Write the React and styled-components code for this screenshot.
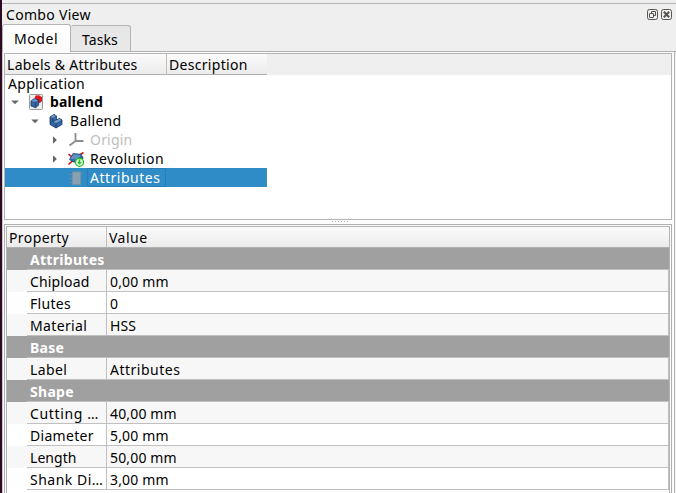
import React from "react";
import styled, { createGlobalStyle } from "styled-components";

const Global = createGlobalStyle`
  * { box-sizing: border-box; }
  body { margin: 0; overflow: hidden; background: #efefef; }
`;

const Window = styled.div`
  width: 676px;
  height: 493px;
  overflow: hidden;
  display: flex;
  flex-direction: column;
  background: #efefef;
  border-left: 2px solid #2c0a22;
  font-family: "Noto Sans", "Open Sans", sans-serif;
  font-size: 14px;
  color: #000;
`;

const TopEdge = styled.div`
  height: 4px;
  flex: none;
  border-bottom: 1px solid #b4b4b4;
`;

const TitleBar = styled.header`
  height: 20px;
  flex: none;
  display: flex;
  align-items: flex-start;
  justify-content: space-between;
  padding: 1px 4px 0 4px;
`;

const DockButtons = styled.div`
  display: flex;
  gap: 3px;
  padding-top: 4px;
  svg { display: block; }
`;

const Label = styled.span`
  display: block;
  white-space: pre;
  line-height: 19px;
  font-weight: ${(p) => (p.$bold ? 700 : 400)};
  letter-spacing: ${(p) => p.$track ?? 0.3}px;
`;

const TabBar = styled.nav`
  height: 28px;
  flex: none;
  display: flex;
  align-items: flex-end;
  border-bottom: 1px solid #b0b0b0;
`;

const Tab = styled.div`
  width: ${(p) => p.$width}px;
  height: ${(p) => (p.$active ? 28 : 26)}px;
  margin-bottom: ${(p) => (p.$active ? -1 : 0)}px;
  padding: 4px 0 0 11px;
  border: 1px solid #b4b4b4;
  border-left-width: ${(p) => (p.$active ? 1 : 0)}px;
  border-bottom: 0;
  border-radius: 3px 3px 0 0;
  background: ${(p) => (p.$active ? "linear-gradient(#ffffff, #fafafa)" : "linear-gradient(#e6e6e6, #e9e9e9)")};
`;

const Pane = styled.main`
  flex: 1;
  min-height: 0;
  width: 673px;
  display: flex;
  flex-direction: column;
  padding: 1px 2px 0 1px;
  background: #fcfcfc;
  border: solid #b4b4b4;
  border-width: 0 1px 0 1px;
  border-left-color: #c8c8c8;
`;

const TreeFrame = styled.section`
  height: 167px;
  flex: none;
  background: #fff;
  border: 1px solid #b4b4b4;
`;

const HeaderBar = styled.div`
  height: 21px;
  display: flex;
  background: #efefef;
`;

const HeaderCell = styled.div`
  width: ${(p) => p.$width};
  flex: none;
  padding: 1px 0 0 2px;
  background: linear-gradient(#fbfbfb, #ebebeb);
  border-bottom: 1px solid #b0b0b0;
  border-right: ${(p) => (p.$last ? "0" : "1px solid #c0c0c0")};
`;

const TreeRow = styled.div`
  width: 262px;
  height: ${(p) => (p.$root ? 17 : 19)}px;
  display: flex;
  align-items: center;
  padding-left: ${(p) => p.$indent}px;
  color: ${(p) => (p.$muted ? "#bebebe" : p.$selected ? "#fff" : "#000")};
  background: ${(p) => (p.$selected ? "#308cc6" : "transparent")};
`;

const ArrowSlot = styled.span`
  width: 19px;
  height: 19px;
  flex: none;
  display: flex;
  align-items: center;
  padding-left: 2px;
`;

const IconSlot = styled.span`
  width: 16px;
  height: 16px;
  flex: none;
  margin-right: 6px;
  svg { display: block; }
`;

const FocusCell = styled.span`
  width: 79px;
  height: 19px;
  margin-left: -3px;
  padding-left: 2px;
  border: 1px solid #2a7db2;
  border-radius: 1px;
  display: flex;
  align-items: center;
  flex: none;
`;

const Splitter = styled.div`
  height: 4px;
  flex: none;
  display: flex;
  justify-content: center;
  gap: 2px;
  padding: 1px 0 0 3px;
`;

const Grip = styled.i`
  width: 1px;
  height: 1px;
  background: #a8a8a8;
`;

const PropertyFrame = styled.section`
  flex: 1;
  min-height: 0;
  overflow: hidden;
  padding: 1px 1px 0;
  background: #fcfcfc;
  border: 1px solid #b0b0b0;
  border-bottom: 0;
`;

const PropertyTable = styled.div`
  height: 100%;
  overflow: hidden;
  background: #fff;
  border: 1px solid #b4b4b4;
  border-bottom: 0;
`;

const GroupRow = styled.div`
  height: 22px;
  padding-left: 20px;
  background: #a0a0a0;
  color: #fff;
`;

const GroupCell = styled.div`
  height: 22px;
  padding: 2px 0 0 3px;
  border-bottom: 1px solid #c0c0c0;
`;

const PropertyRow = styled.div`
  height: 22px;
  display: flex;
  padding-left: 20px;
  background: ${(p) => (p.$alt ? "#f7f7f7" : "#fff")};
`;

const PropertyCell = styled.div`
  width: ${(p) => (p.$value ? "562px" : "80px")};
  padding: 2px 0 0 3px;
  border-right: 1px solid #c0c0c0;
  border-bottom: 1px solid #c0c0c0;
`;

const FloatIcon = () => (
  <svg width="11" height="11" viewBox="0 0 11 11" fill="none" stroke="#55524f">
    <rect x=".5" y=".5" width="10" height="10" rx="2" />
    <path d="M4.5 4V2.5h4v4H7" />
    <rect x="2.5" y="4.5" width="4" height="4" rx=".5" />
  </svg>
);

const CloseIcon = () => (
  <svg width="11" height="11" viewBox="0 0 11 11" fill="none" stroke="#55524f">
    <rect x=".5" y=".5" width="10" height="10" rx="2" />
    <path d="M2.8 2.8l5.4 5.4M8.2 2.8L2.8 8.2" strokeWidth="2" />
  </svg>
);

const Arrow = ({ open }) => (
  <svg width="8" height="8" viewBox="0 0 8 8" fill="#666">
    {open ? <path d="M.3 2.4h7.4L4 6.2z" /> : <path d="M2 .3v7.4L5.9 4z" />}
  </svg>
);

const DocumentIcon = () => (
  <svg width="16" height="16" viewBox="0 0 16 16">
    <rect x="1.5" y=".5" width="13" height="15" rx="1" fill="#ededed" stroke="#999" />
    <path d="M6.5 4l1.2-2.4L11 1.2l3 2v4l-2.5 2z" fill="#dc1717" />
    <path d="M3 7l3-2.2 4.6 1V11l-2.8 2.8L3 12z" fill="#3465a4" stroke="#17365f" strokeWidth=".8" />
    <path d="M3.6 7l2.6-1.7 3.6.8-2.3 1.7z" fill="#729fcf" />
    <path d="M7.6 8v5.4" stroke="#17365f" strokeWidth=".6" />
  </svg>
);

const BodyIcon = () => (
  <svg width="16" height="16" viewBox="0 0 16 16" stroke="#17365f" strokeWidth=".8" strokeLinejoin="round">
    <path d="M2 4l4-2.5L8.5 3v4l3-1.5L14 7v4.5L8 15l-6-3.5z" fill="#3465a4" />
    <path d="M2 4l4-2.5L8.5 3 4.8 5.3zM5 9l3.5-2 3-1.5L14 7 8 10.5z" fill="#729fcf" strokeWidth=".4" />
    <path d="M8 10.5V15M4.8 5.3V9" fill="none" />
  </svg>
);

const OriginIcon = () => (
  <svg width="16" height="16" viewBox="0 0 16 16" fill="none" stroke="#8c8c8c" strokeWidth="1.8">
    <path d="M7.5 1v8H15.5M7.5 9L1.5 13.5" />
  </svg>
);

const RevolutionIcon = () => (
  <svg width="16" height="16" viewBox="0 0 16 16">
    <path d="M.5 13.5L5 9.5M11 4.5l4.5-3M.5 3l3.5 3" stroke="#cc1c1c" strokeWidth="1.6" />
    <path d="M1.5 8.5L5 2.5l8 .8 2.2 3.7-3.2 5-7-1.2z" fill="#3465a4" stroke="#24466f" strokeWidth=".8" />
    <path d="M2.5 7.8L5.4 3.2l7.3.7-2.4 5z" fill="#5f8fc2" />
    <circle cx="11.5" cy="11.3" r="4" fill="#fff" stroke="#12c912" strokeWidth="1.3" />
    <path d="M10.6 8.4h1.8v2.6h1.4l-2.3 2.8-2.3-2.8h1.4z" fill="#12c912" />
  </svg>
);

const AttributeIcon = () => (
  <svg width="16" height="16" viewBox="0 0 16 16">
    <path d="M1 4.5h4M1 8.5h4M1 12.5h4M12 3.5h3" stroke="#688da8" strokeWidth="1.2" />
    <rect x="4.5" y="2" width="8" height="12.5" fill="#87a0b2" stroke="#7890a2" />
  </svg>
);

const treeItems = [
  { text: "ballend", icon: <DocumentIcon />, indent: 4, open: true, bold: true, track: 0.15 },
  { text: "Ballend", icon: <BodyIcon />, indent: 24, open: true, track: 0.3 },
  { text: "Origin", icon: <OriginIcon />, indent: 44, open: false, muted: true, track: 0.2 },
  { text: "Revolution", icon: <RevolutionIcon />, indent: 44, open: false, track: 0.4 },
];

const groups = [
  {
    name: "Attributes",
    rows: [
      { name: "Chipload", track: 0.15, value: "0,00 mm", alt: true },
      { name: "Flutes", track: 0.3, value: "0" },
      { name: "Material", track: 0.35, value: "HSS", alt: true },
    ],
  },
  {
    name: "Base",
    rows: [{ name: "Label", track: 0.4, value: "Attributes", valueTrack: 0.5, alt: true }],
  },
  {
    name: "Shape",
    rows: [
      { name: "Cutting …", track: 0.65, value: "40,00 mm", alt: true },
      { name: "Diameter", track: 0.3, value: "5,00 mm" },
      { name: "Length", track: 0.05, value: "50,00 mm", alt: true },
      { name: "Shank Di…", track: 0.5, value: "3,00 mm" },
    ],
  },
];

export default function App() {
  return (
    <>
      <Global />
      <Window>
        <TopEdge />
        <TitleBar>
          <Label>Combo View</Label>
          <DockButtons><FloatIcon /><CloseIcon /></DockButtons>
        </TitleBar>
        <TabBar>
          <Tab $width={69} $active><Label $track={0.6}>Model</Label></Tab>
          <Tab $width={60}><Label $track={0.1}>Tasks</Label></Tab>
        </TabBar>
        <Pane>
          <TreeFrame>
            <HeaderBar>
              <HeaderCell $width="162px"><Label>Labels &amp; Attributes</Label></HeaderCell>
              <HeaderCell $width="100px" $last><Label>Description</Label></HeaderCell>
            </HeaderBar>
            <TreeRow $root $indent={3}><Label>Application</Label></TreeRow>
            {treeItems.map((item) => (
              <TreeRow key={item.text} $indent={item.indent} $muted={item.muted}>
                <ArrowSlot><Arrow open={item.open} /></ArrowSlot>
                <IconSlot>{item.icon}</IconSlot>
                <Label $bold={item.bold} $track={item.track}>{item.text}</Label>
              </TreeRow>
            ))}
            <TreeRow $indent={63} $selected>
              <IconSlot><AttributeIcon /></IconSlot>
              <FocusCell><Label $track={0.5}>Attributes</Label></FocusCell>
            </TreeRow>
          </TreeFrame>
          <Splitter>{[0, 1, 2, 3, 4, 5].map((n) => <Grip key={n} />)}</Splitter>
          <PropertyFrame>
            <PropertyTable>
              <HeaderBar>
                <HeaderCell $width="100px"><Label $track={0.4}>Property</Label></HeaderCell>
                <HeaderCell $width="562px" $last><Label $track={0.5}>Value</Label></HeaderCell>
              </HeaderBar>
              {groups.map((group) => (
                <React.Fragment key={group.name}>
                  <GroupRow><GroupCell><Label $bold>{group.name}</Label></GroupCell></GroupRow>
                  {group.rows.map((row) => (
                    <PropertyRow key={row.name} $alt={row.alt}>
                      <PropertyCell><Label $track={row.track}>{row.name}</Label></PropertyCell>
                      <PropertyCell $value><Label $track={row.valueTrack ?? 0.15}>{row.value}</Label></PropertyCell>
                    </PropertyRow>
                  ))}
                </React.Fragment>
              ))}
            </PropertyTable>
          </PropertyFrame>
        </Pane>
      </Window>
    </>
  );
}
